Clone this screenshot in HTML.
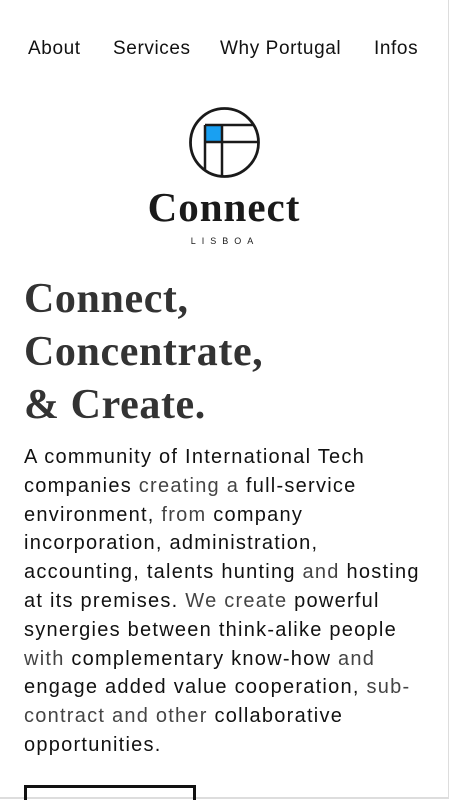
<!DOCTYPE html>
<html><head><meta charset="utf-8"><style>
html,body{margin:0;padding:0;background:#fff;width:450px;height:800px;overflow:hidden}
body{position:relative;font-family:"Liberation Sans",sans-serif;color:#111}
.frame{position:absolute;left:0;top:0;width:448px;height:797px;border-right:1px solid #ddd;border-bottom:2px solid #ddd}
nav{position:absolute;top:38px;left:0;width:450px;font-size:19px;letter-spacing:0.6px;color:#111}
nav span{position:absolute;white-space:nowrap}
h1{position:absolute;left:24px;top:273px;margin:0;font-family:"Liberation Serif",serif;font-weight:bold;font-size:42px;letter-spacing:0.6px;line-height:53px;color:#333}
p{position:absolute;left:24px;top:443px;width:430px;margin:0;font-size:20px;letter-spacing:1.25px;line-height:28.8px;color:#111;white-space:nowrap}
.g{color:#444}
.btn{position:absolute;left:24px;top:785px;width:166px;height:30px;border:3px solid #111}
</style></head><body>
<div class="frame"></div>
<nav><span style="left:28px">About</span><span style="left:113px">Services</span><span style="left:220px">Why Portugal</span><span style="left:374px">Infos</span></nav>
<svg style="position:absolute;left:0;top:0" width="450" height="260">
<defs><clipPath id="c"><circle cx="224.5" cy="142.5" r="33"/></clipPath></defs>
<rect x="206" y="126" width="16" height="16" fill="#19a0f2"/>
<g clip-path="url(#c)" stroke="#1a1a1a" stroke-width="2.5" fill="none">
<path d="M205 125V180M222 125V180M205 125H260M205 142H260"/>
</g>
<circle cx="224.5" cy="142.5" r="34" fill="none" stroke="#1a1a1a" stroke-width="2.8"/>
<text x="224" y="221" text-anchor="middle" font-family="Liberation Serif,serif" font-weight="bold" font-size="41" letter-spacing="1" fill="#1a1a1a">Connect</text>
<text x="225" y="244" text-anchor="middle" font-family="Liberation Sans,sans-serif" font-size="9" letter-spacing="6" fill="#1a1a1a">LISBOA</text>
</svg>
<h1>Connect,<br>Concentrate,<br>&amp; Create.</h1>
<p>A community of International Tech<br>companies <span class="g">creating a</span> full-service<br>environment, <span class="g">from</span> company<br>incorporation, administration,<br>accounting, talents hunting <span class="g">and</span> hosting<br>at its premises. <span class="g">We create</span> powerful<br>synergies between think-alike people<br><span class="g">with</span> complementary know-how <span class="g">and</span><br>engage added value cooperation, <span class="g">sub-</span><br><span class="g">contract and other</span> collaborative<br>opportunities.</p>
<div class="btn"></div>
</body></html>
